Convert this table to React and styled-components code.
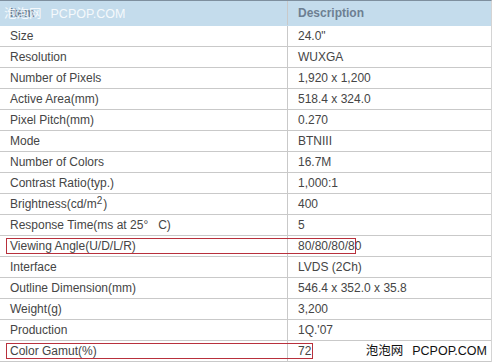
import React from 'react';
import styled, { createGlobalStyle } from 'styled-components';

const Global = createGlobalStyle`
  body {
    margin: 0;
    background: #fff;
    font-family: "Liberation Sans", Arial, sans-serif;
  }
`;

const Sheet = styled.div`
  position: relative;
  width: 492px;
  height: 362px;
  overflow: hidden;
  background: #fff;
`;

const Table = styled.div`
  width: 491px;
  border-right: 1px solid #d4d4d4;
  border-top: 1px solid #7e8f9e;
`;

const Row = styled.div`
  position: relative;
  display: grid;
  grid-template-columns: 287px 1fr;
  height: ${p => (p.head ? '24px' : '20px')};
  background: ${p => (p.head ? '#c4dcec' : '#fff')};
  border-bottom: 1px solid ${p => (p.head ? '#c4dcec' : '#c9c9c9')};
`;

const Cell = styled.div`
  display: flex;
  align-items: center;
  padding-left: 10px;
  font-size: 12px;
  color: ${p => (p.head ? '#6d7f92' : '#454545')};
  font-weight: ${p => (p.head ? 'bold' : 'normal')};
  border-left: ${p => (p.right ? '1px solid #c9c9c9' : 'none')};
  white-space: nowrap;
`;

const Mark = styled.div`
  position: absolute;
  top: 2px;
  left: 6px;
  width: ${p => p.w}px;
  height: 14px;
  border: 1px solid #b8303c;
  pointer-events: none;
`;

const Watermark = styled.div`
  position: absolute;
  font-size: 12.5px;
  white-space: nowrap;
  color: ${p => (p.light ? 'rgba(255,255,255,0.85)' : '#111')};
  font-family: "Liberation Sans", "Noto Sans CJK SC", sans-serif;
  ${p => (p.light ? 'top: 3px; left: 4px;' : 'bottom: 3px; right: 5px;')}

  span {
    margin-left: 9px;
  }
`;

const Sup = styled.span`
  display: inline-block;
  font-size: 10px;
  transform: translateY(-4px);
  margin-right: 1px;
`;

const rows = [
  ['Size', '24.0"'],
  ['Resolution', 'WUXGA'],
  ['Number of Pixels', '1,920 x 1,200'],
  ['Active Area(mm)', '518.4 x 324.0'],
  ['Pixel Pitch(mm)', '0.270'],
  ['Mode', 'BTNIII'],
  ['Number of Colors', '16.7M'],
  ['Contrast Ratio(typ.)', '1,000:1'],
  [<>Brightness(cd/m<Sup>2</Sup>)</>, '400'],
  ['Response Time(ms at 25°\u00a0\u00a0 C)', '5'],
  ['Viewing Angle(U/D/L/R)', '80/80/80/80', 348],
  ['Interface', 'LVDS (2Ch)'],
  ['Outline Dimension(mm)', '546.4 x 352.0 x 35.8'],
  ['Weight(g)', '3,200'],
  ['Production', "1Q.'07"],
  ['Color Gamut(%)', '72', 305],
];

const App = () => (
  <Sheet>
    <Global />
    <Table>
      <Row head>
        <Cell head>Item</Cell>
        <Cell head right>Description</Cell>
      </Row>
      {rows.map(([name, value, mark], i) => (
        <Row key={i}>
          <Cell>{name}</Cell>
          <Cell right>{value}</Cell>
          {mark && <Mark w={mark} />}
        </Row>
      ))}
    </Table>
    <Watermark light>泡泡网<span>PCPOP.COM</span></Watermark>
    <Watermark>泡泡网<span>PCPOP.COM</span></Watermark>
  </Sheet>
);

export default App;
